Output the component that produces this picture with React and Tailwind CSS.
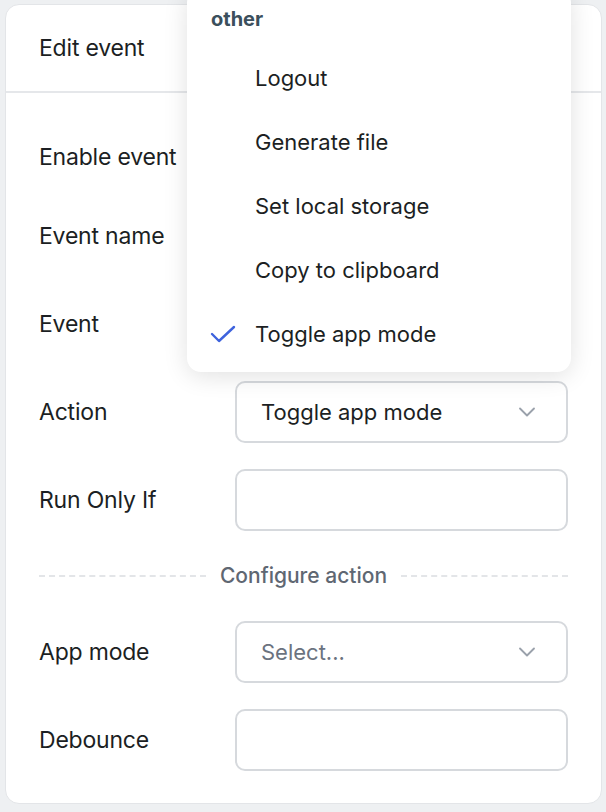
import { ChevronDown } from "lucide-react";

const font = { fontFamily: "Inter, 'Noto Sans', sans-serif" };

const menuItems = ["Logout", "Generate file", "Set local storage", "Copy to clipboard", "Toggle app mode"];

function Row({ label, children }) {
  return (
    <div className="flex items-center h-[88px]">
      <div className="w-[196px] shrink-0 text-[23px] tracking-[-0.2px] text-[#1c1f23]">{label}</div>
      <div className="flex-1">{children}</div>
    </div>
  );
}

function SelectBox({ value, placeholder }) {
  return (
    <div className="h-[62px] rounded-[10px] border-2 border-[#d6d9dd] bg-white flex items-center justify-between pl-[24px] pr-[25px]">
      <span className={`text-[22px] ${value ? "text-[#1c1f23]" : "text-[#6b7380]"}`}>{value || placeholder}</span>
      <ChevronDown size={28} strokeWidth={1.6} className="text-[#9aa1ab]" />
    </div>
  );
}

function TextBox() {
  return <div className="h-[62px] rounded-[10px] border-2 border-[#d6d9dd] bg-white" />;
}

export default function App() {
  return (
    <div className="w-[606px] h-[812px] bg-[#eef0f2] overflow-hidden pl-[5px] pt-[4px]" style={font}>
      <div className="relative w-[597px] h-[800px] bg-white rounded-[14px] border border-[#e3e5e8]">
        <div className="h-[88px] border-b-2 border-[#e5e7ea] flex items-center px-[33px]">
          <span className="text-[23px] tracking-[-0.2px] text-[#1c1f23]">Edit event</span>
        </div>

        <div className="px-[33px] pt-[24px]">
          <div className="h-[80px] flex items-center text-[23px] tracking-[-0.2px] text-[#1c1f23]">Enable event</div>
          <div className="h-[78px] flex items-center text-[23px] tracking-[-0.2px] text-[#1c1f23]">Event name</div>
          <div className="h-[88px] mt-[5px] flex items-center text-[23px] tracking-[-0.2px] text-[#1c1f23]">Event</div>
          <Row label="Action">
            <SelectBox value="Toggle app mode" />
          </Row>
          <Row label="Run Only If">
            <TextBox />
          </Row>
          <div className="flex items-center gap-[14px] h-[64px]">
            <div className="flex-1 border-t-2 border-dashed border-[#e3e5e8]" />
            <span className="text-[21px] font-medium text-[#5f6772]">Configure action</span>
            <div className="flex-1 border-t-2 border-dashed border-[#e3e5e8]" />
          </div>
          <Row label="App mode">
            <SelectBox placeholder="Select..." />
          </Row>
          <Row label="Debounce">
            <TextBox />
          </Row>
        </div>

        {/* dropdown menu */}
        <div className="absolute left-[181px] top-[-16px] w-[384px] bg-white rounded-[14px] shadow-[0_4px_24px_rgba(0,0,0,0.12)] pt-[17px] pb-[6px]">
          <div className="pl-[24px] h-[26px] leading-[26px] text-[20px] font-bold text-[#3b4f5c] mb-[14px]">other</div>
          {menuItems.map((item, i) => (
            <div key={item} className="h-[64px] flex items-center">
              <div className="w-[68px] flex justify-center pl-[4px]">
                {i === menuItems.length - 1 && (
                  <svg width="26" height="20" viewBox="0 0 26 20" fill="none">
                    <path d="M2 10 L9 17 L24 3" stroke="#3e63dd" strokeWidth="2.4" strokeLinecap="round" strokeLinejoin="round" />
                  </svg>
                )}
              </div>
              <span className="text-[22px] text-[#1c1f23]">{item}</span>
            </div>
          ))}
        </div>
      </div>
    </div>
  );
}
